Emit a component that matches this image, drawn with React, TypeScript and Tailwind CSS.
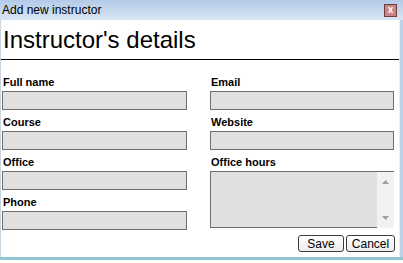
import React from "react";

const Field = ({ label, className = "" }: { label: string; className?: string }) => (
  <div className={"flex flex-col " + className}>
    <div className="text-[11px] leading-[13px] font-bold text-black mb-[2px] pl-[1px]">{label}</div>
    <div className="h-[19px] bg-[#e0e0e0] border border-[#6e6e6e] mb-[6px]" />
  </div>
);

export default function App() {
  return (
    <div
      className="w-[403px] h-[263px] bg-white flex flex-col overflow-hidden"
      style={{ fontFamily: '"Liberation Sans", Arial, sans-serif' }}
    >
      <div className="h-[20px] flex items-center justify-between pl-[2px] pr-[6px] bg-gradient-to-b from-[#b3cae8] to-[#d9e5f4]">
        <span className="text-[12px] leading-[14px] text-black">Add new instructor</span>
        <div className="w-[13px] h-[13px] bg-[#c78585] border border-[#6e3c3c] flex items-center justify-center text-white text-[10px] leading-none font-bold">
          x
        </div>
      </div>
      <div className="flex-1 flex">
        <div className="w-[1px] bg-[#c8d4e0]" />
        <div className="flex-1 flex flex-col">
          <div className="h-[40px] border-b border-black flex items-end pl-[2px] pb-[5px]">
            <span className="text-[24px] leading-[28px] text-black">Instructor's details</span>
          </div>
          <div className="flex pt-[16px] pl-[1px]">
            <div className="w-[185px] flex flex-col">
              <Field label="Full name" />
              <Field label="Course" />
              <Field label="Office" />
              <Field label="Phone" />
            </div>
            <div className="w-[184px] ml-[23px] flex flex-col">
              <Field label="Email" />
              <Field label="Website" />
              <div className="flex flex-col">
                <div className="text-[11px] leading-[13px] font-bold text-black mb-[2px] pl-[1px]">Office hours</div>
                <div className="h-[57px] flex border border-[#6e6e6e] border-r-0 border-b-0 bg-[#e0e0e0]">
                  <div className="flex-1 border-b border-[#6e6e6e]" />
                  <div className="w-[17px] bg-[#f2f2f2] flex flex-col items-center justify-between py-[8px]">
                    <svg width="7" height="4" viewBox="0 0 7 4"><path d="M0 4 L3.5 0 L7 4 Z" fill="#a0a0a0" /></svg>
                    <svg width="7" height="4" viewBox="0 0 7 4"><path d="M0 0 L3.5 4 L7 0 Z" fill="#a0a0a0" /></svg>
                  </div>
                </div>
              </div>
              <div className="flex justify-end gap-[2px] mt-[7px] -mr-[1px]">
                <div className="w-[46px] h-[17px] rounded-[3px] border border-[#3c3c3c] bg-gradient-to-b from-white to-[#ececec] flex items-center justify-center text-[12px] text-black">
                  Save
                </div>
                <div className="w-[49px] h-[17px] rounded-[3px] border border-[#3c3c3c] bg-gradient-to-b from-white to-[#ececec] flex items-center justify-center text-[12px] text-black">
                  Cancel
                </div>
              </div>
            </div>
          </div>
        </div>
        <div className="w-[4px] bg-[#bcd2e8] border-l border-[#e6eef7]" />
      </div>
      <div className="h-[3px] bg-[#90c6ce]" />
      <div className="h-[3px] bg-white" />
    </div>
  );
}
